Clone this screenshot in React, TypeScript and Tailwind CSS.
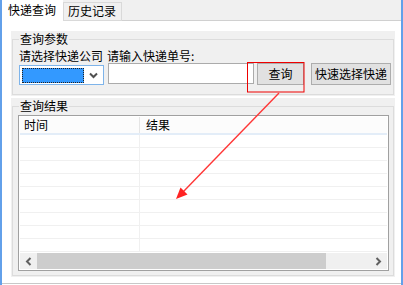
export default function App() {
  const rows = Array.from({ length: 9 });
  return (
    <div className="relative w-[403px] h-[285px] overflow-hidden bg-white font-['Noto_Sans_CJK_SC',sans-serif] text-[12px] leading-[14px] text-black">
      <div className="h-full border-x-2 border-[#62a0ea] flex flex-col">
        {/* tab strip */}
        <div className="flex items-end h-[21px] bg-[#f0f0f0] shrink-0">
          <div className="h-[21px] w-[61px] bg-white pl-[6px] pt-[3px] whitespace-nowrap">快递查询</div>
          <div className="h-[19px] w-[59px] border border-[#d9d9d9] pl-[4px] pt-[1px] whitespace-nowrap">历史记录</div>
          <div className="flex-1 h-full border-b border-[#d0d0d0]" />
        </div>

        {/* tab page */}
        <div className="h-[263px] shrink-0 flex flex-col pl-[9px] pr-[6px] pt-[10px] pb-[6px] border-b border-[#c8c8c8]">
          {/* group 1 */}
          <div className="h-[65px] w-[384px] bg-[#f0f0f0] p-[1px] shrink-0">
            <fieldset className="h-[63px] border border-[#dcdcdc] pl-[6px]">
              <legend className="px-[1px]">查询参数</legend>
              <div className="flex gap-[4px] mt-[3px] whitespace-nowrap">
                <span>请选择快递公司</span>
                <span>请输入快递单号:</span>
              </div>
              <div className="flex items-start">
                <div className="mt-[2px] h-[20px] w-[85px] border border-[#7eb4ea] bg-white flex items-center pl-[2px]">
                  <div className="w-[62px] h-[15px] bg-[#3399ff] border border-dotted border-[#222]" />
                  <svg className="ml-[5px]" width="9" height="7" viewBox="0 0 9 7">
                    <polyline points="1,1.5 4.5,5 8,1.5" fill="none" stroke="#505050" strokeWidth="2" />
                  </svg>
                </div>
                <div className="ml-[4px] h-[21px] w-[146px] border border-[#ababab] bg-white" />
                <button className="ml-[3px] h-[22px] w-[47px] bg-[#e1e1e1] border border-[#adadad] flex items-center justify-center leading-[14px]">
                  查询
                </button>
                <button className="ml-[7px] h-[22px] w-[80px] bg-[#e1e1e1] border border-[#adadad] flex items-center justify-center whitespace-nowrap leading-[14px]">
                  快速选择快递
                </button>
              </div>
            </fieldset>
          </div>

          {/* group 2 */}
          <div className="mt-[2px] h-[179px] w-[384px] bg-[#f0f0f0] p-[1px] shrink-0">
            <fieldset className="h-[177px] border border-[#dcdcdc] pl-[5px] pr-[4px]">
              <legend className="ml-[1px] px-[1px]">查询结果</legend>
              <div className="mt-[2px] h-[156px] border border-[#a0a0a0] bg-white p-[1px] flex flex-col">
                {/* header */}
                <div className="h-[18px] shrink-0 flex bg-[#fcfcfc] border-b-2 border-[#e3edf8]">
                  <div className="w-[120px] h-full border-r border-[#e5e5e5] pl-[4px] flex items-center">时间</div>
                  <div className="flex-1 pl-[6px] flex items-center">结果</div>
                </div>
                {/* rows */}
                <div className="h-[118px] shrink-0 overflow-hidden">
                  {rows.map((_, i) => (
                    <div key={i} className="h-[13px] flex border-b border-[#f0f0f0]">
                      <div className="w-[120px] h-full border-r border-[#f0f0f0]" />
                      <div className="flex-1" />
                    </div>
                  ))}
                </div>
                {/* horizontal scrollbar */}
                <div className="h-[16px] shrink-0 flex bg-[#f0f0f0]">
                  <div className="w-[17px] h-full flex items-center justify-center">
                    <svg width="7" height="9" viewBox="0 0 7 9">
                      <polyline points="5.5,1 2,4.5 5.5,8" fill="none" stroke="#606060" strokeWidth="2" />
                    </svg>
                  </div>
                  <div className="w-[289px] h-full bg-[#cdcdcd]" />
                  <div className="flex-1" />
                  <div className="w-[17px] h-full flex items-center justify-center">
                    <svg width="7" height="9" viewBox="0 0 7 9">
                      <polyline points="1.5,1 5,4.5 1.5,8" fill="none" stroke="#606060" strokeWidth="2" />
                    </svg>
                  </div>
                </div>
              </div>
            </fieldset>
          </div>
        </div>
      </div>

      {/* red annotation overlay */}
      <svg className="absolute left-0 top-0 pointer-events-none" width="403" height="285" viewBox="0 0 403 285">
        <rect x="247.5" y="62.5" width="56.5" height="29.5" fill="none" stroke="#ee0000" strokeWidth="1" />
        <line x1="279" y1="93" x2="183" y2="192" stroke="#ff3636" strokeWidth="1.4" />
        <polygon points="176,199 187.5,194.5 180.5,187.5" fill="#ff2222" />
      </svg>
    </div>
  );
}
